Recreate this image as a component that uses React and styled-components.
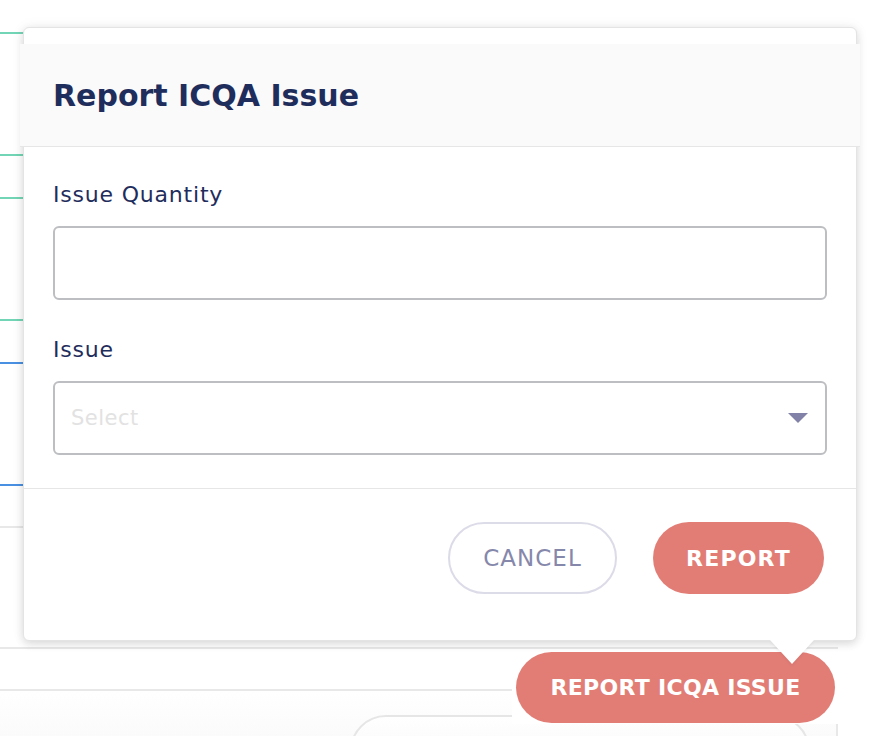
import styled, { createGlobalStyle } from "styled-components";

const FONT = `"DejaVu Sans", Inter, sans-serif`;

const GlobalStyle = createGlobalStyle`
  html, body {
    margin: 0;
    padding: 0;
    background: #ffffff;
    font-family: ${FONT};
  }
`;

const Page = styled.div`
  position: relative;
  width: 878px;
  height: 736px;
  overflow: hidden;
  background: #ffffff;
`;

const List = styled.div`
  width: 838px;
  padding-top: 32px;
`;

const Item = styled.div`
  height: ${(p) => p.h || 120}px;
  border-top: 2px solid ${(p) => p.color};
  border-bottom: 2px solid ${(p) => p.color};
  margin-bottom: ${(p) => p.gap || 41}px;
`;

const LastItem = styled.div`
  height: 60px;
  border-top: 2px solid #e8e8e8;
  border-right: 2px solid #e8e8e8;
  border-top-right-radius: 8px;
  background: linear-gradient(#ffffff, #f7f7f7);
  padding-top: 24px;
  padding-left: 350px;
`;

const GhostPill = styled.div`
  width: 456px;
  height: 70px;
  border: 2px solid #e6e6e6;
  border-radius: 36px;
  background: linear-gradient(#ffffff, #f4f4f4);
`;

const Popover = styled.div`
  position: absolute;
  z-index: 2;
  left: 23px;
  top: 27px;
  width: 834px;
  height: 614px;
  box-sizing: border-box;
  padding-top: 16px;
  background: #ffffff;
  border: 1px solid #e4e4e4;
  border-radius: 6px;
  box-shadow: 0 3px 8px rgba(0, 0, 0, 0.12), 0 0 14px rgba(0, 0, 0, 0.06);
  display: flex;
  flex-direction: column;

  &::after {
    content: "";
    position: absolute;
    left: 746px;
    bottom: -24px;
    width: 0;
    height: 0;
    border-left: 22px solid transparent;
    border-right: 22px solid transparent;
    border-top: 24px solid #ffffff;
    filter: drop-shadow(0 2px 1px rgba(0, 0, 0, 0.05));
  }
`;

const Header = styled.div`
  margin: 0 -4px;
  height: 103px;
  background: #fafafa;
  border-bottom: 1px solid #e6e6e6;
  display: flex;
  align-items: center;
  padding-left: 33px;
  box-sizing: border-box;
`;

const Title = styled.h2`
  margin: 0;
  font-size: 30px;
  font-weight: 700;
  color: #1f2d5c;
`;

const Body = styled.div`
  padding: 36px 29px 33px;
  border-bottom: 1px solid #e6e6e6;
  display: flex;
  flex-direction: column;
`;

const Label = styled.label`
  font-size: 22px;
  line-height: 24px;
  letter-spacing: 0.8px;
  color: #1f2d5c;
  margin-bottom: 19px;
`;

const Field = styled.div`
  height: 74px;
  box-sizing: border-box;
  border: 2px solid #bdbec2;
  border-radius: 6px;
  margin-bottom: ${(p) => p.gap || 0}px;
  display: flex;
  align-items: center;
  padding: 0 16px;
`;

const Placeholder = styled.span`
  font-size: 21px;
  letter-spacing: 0.5px;
  color: #e2e2e2;
  flex: 1;
`;

const Caret = styled.span`
  width: 0;
  height: 0;
  border-left: 10px solid transparent;
  border-right: 10px solid transparent;
  border-top: 10px solid #8281a8;
  margin-right: 1px;
`;

const Footer = styled.div`
  flex: 1;
  display: flex;
  justify-content: flex-end;
  align-items: flex-start;
  gap: 36px;
  padding: 33px 32px 0 0;
`;

const PillButton = styled.button`
  height: 72px;
  width: ${(p) => p.w}px;
  border-radius: 36px;
  font-family: ${FONT};
  cursor: pointer;
  border: ${(p) => (p.outline ? "2px solid #dcdbe8" : "none")};
  background: ${(p) => (p.outline ? "#ffffff" : "#e27d76")};
  color: ${(p) => (p.outline ? "#8688ab" : "#ffffff")};
  font-size: ${(p) => (p.outline ? 23 : 22)}px;
  letter-spacing: ${(p) => (p.outline ? 1 : 1.2)}px;
  font-weight: ${(p) => (p.outline ? 400 : 700)};
`;

const TriggerWrap = styled.div`
  position: absolute;
  z-index: 1;
  left: 512px;
  top: 651px;
  width: 326px;
  height: 73px;
  background: #ffffff;
  display: flex;
  align-items: center;
  padding-left: 4px;
  box-sizing: border-box;
`;

const Trigger = styled.button`
  width: 319px;
  height: 71px;
  border: none;
  border-radius: 36px;
  background: #e27d76;
  color: #ffffff;
  font-family: ${FONT};
  font-size: 22px;
  letter-spacing: 0.3px;
  font-weight: 700;
  cursor: pointer;
`;

export default function App() {
  return (
    <Page>
      <GlobalStyle />
      <List>
        <Item color="#72d5b5" />
        <Item color="#72d5b5" />
        <Item color="#4a90e2" gap={40} />
        <Item color="#e8e8e8" h={119} gap={40} />
        <LastItem>
          <GhostPill />
        </LastItem>
      </List>

      <Popover>
        <Header>
          <Title>Report ICQA Issue</Title>
        </Header>
        <Body>
          <Label>Issue Quantity</Label>
          <Field gap={38} />
          <Label>Issue</Label>
          <Field>
            <Placeholder>Select</Placeholder>
            <Caret />
          </Field>
        </Body>
        <Footer>
          <PillButton outline w={169}>CANCEL</PillButton>
          <PillButton w={171}>REPORT</PillButton>
        </Footer>
      </Popover>

      <TriggerWrap>
        <Trigger>REPORT ICQA ISSUE</Trigger>
      </TriggerWrap>
    </Page>
  );
}
